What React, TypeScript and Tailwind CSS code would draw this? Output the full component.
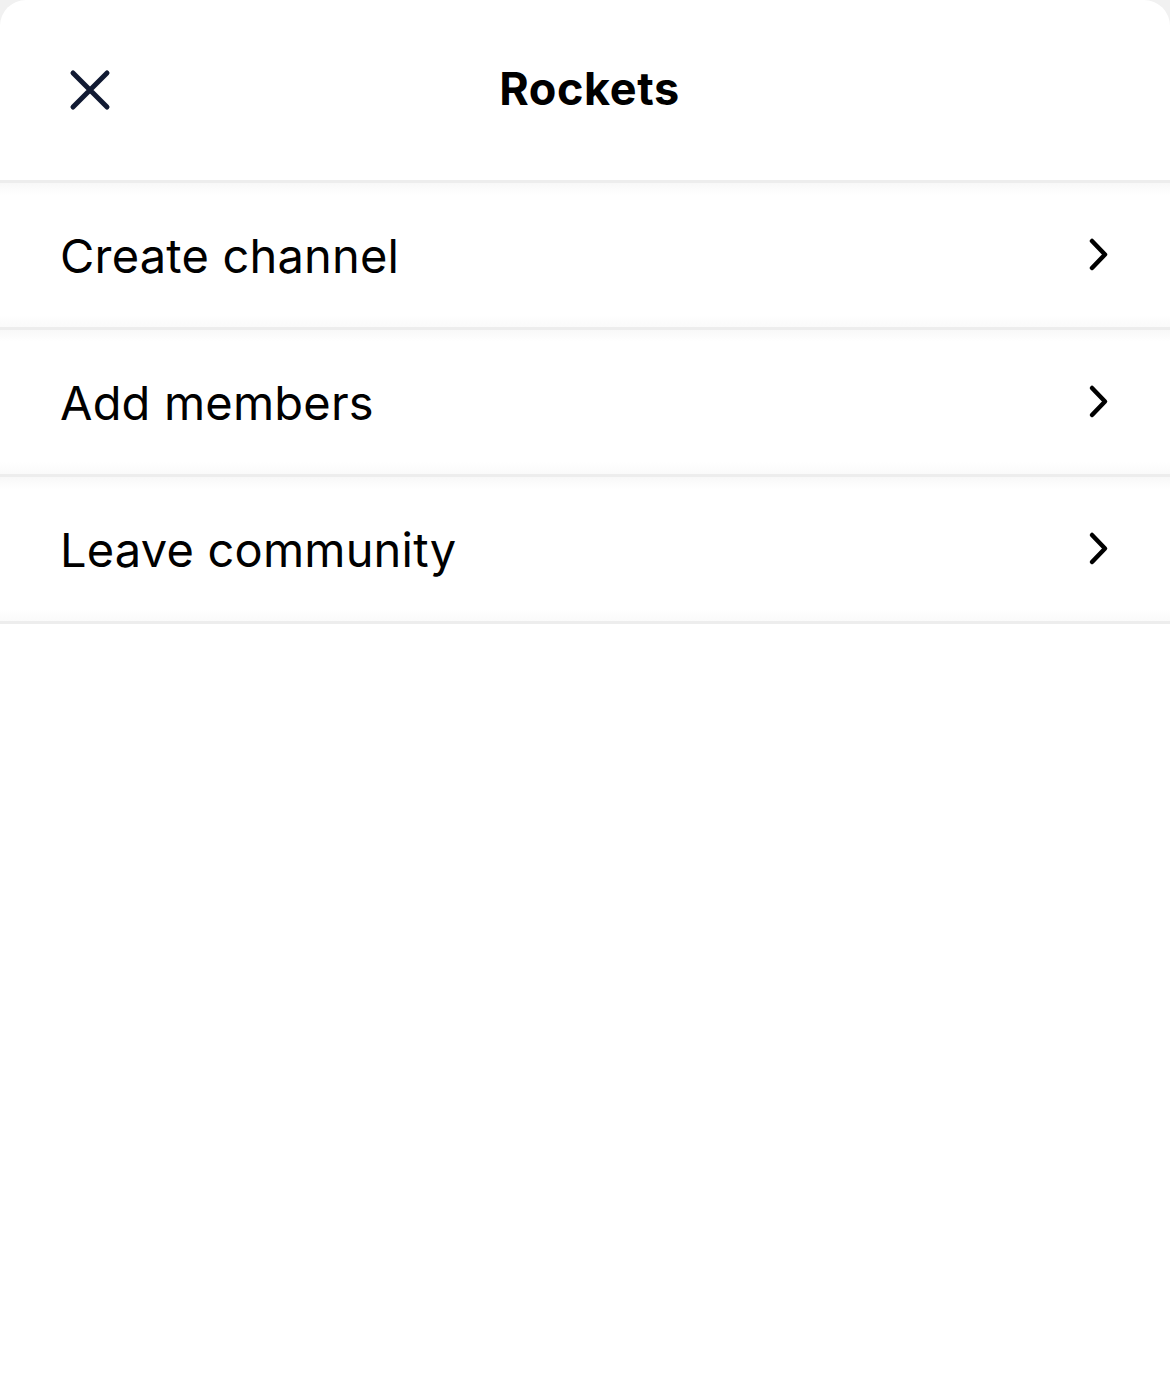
import React from 'react'

const rows = ['Create channel', 'Add members', 'Leave community']

const Chevron = () => (
  <svg width="26" height="36" viewBox="0 0 26 36" fill="none">
    <path d="M6 4 L19 17.5 L6 31" stroke="#000" strokeWidth="4.5" strokeLinecap="round" strokeLinejoin="round" />
  </svg>
)

const App = () => {
  return (
    <div className="w-[1170px] h-[1373px] bg-[#f1f1f1] overflow-hidden" style={{ fontFamily: 'Inter, "Noto Sans", sans-serif' }}>
      <div className="w-full h-full bg-white rounded-t-[26px]">
        <div className="h-[183px] relative flex items-center justify-center border-b-[3px] border-[#ededed]">
          <button className="absolute left-[60px] top-[60px] w-[60px] h-[60px] flex items-center justify-center">
            <svg width="44" height="44" viewBox="0 0 44 44" fill="none">
              <path d="M5 5 L39 39 M39 5 L5 39" stroke="#111a33" strokeWidth="5" strokeLinecap="round" />
            </svg>
          </button>
          <h1 className="text-[45px] font-bold text-black tracking-[0.6px] pb-[2px] ml-[9px]">Rockets</h1>
        </div>
        {rows.map((r) => (
          <div
            key={r}
            className="h-[147px] flex items-center justify-between pl-[60px] pr-[58px] border-b-[3px] border-[#ededed] bg-[linear-gradient(to_bottom,#f8f8f8,#ffffff_12px,#ffffff_calc(100%-12px),#fafafa)]"
          >
            <span className="text-[47px] text-black tracking-[0.2px] pt-[2px]">{r}</span>
            <Chevron />
          </div>
        ))}
      </div>
    </div>
  )
}

export default App
